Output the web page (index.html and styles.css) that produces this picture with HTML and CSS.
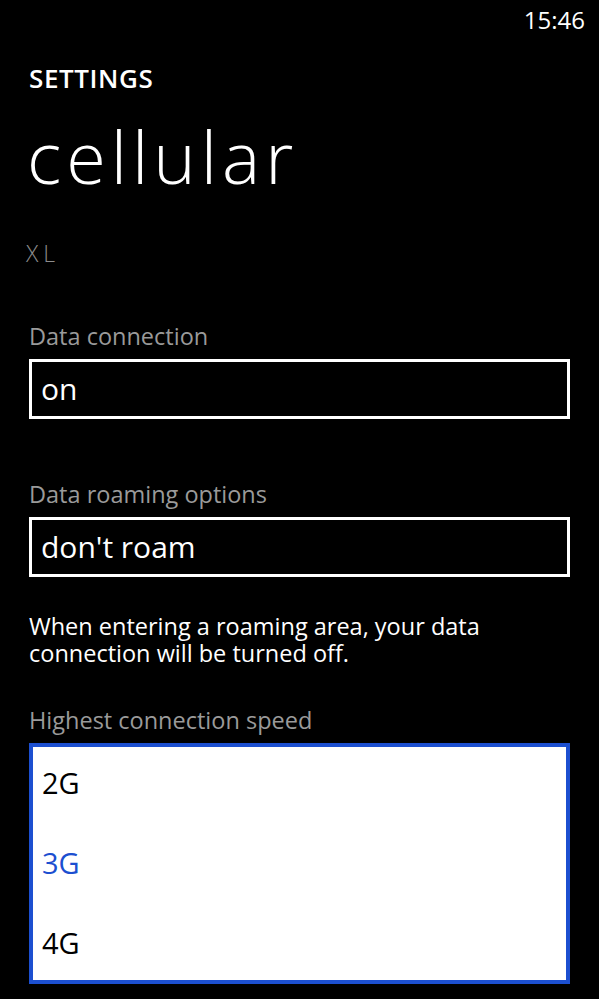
FILE: index.html
```html
<!DOCTYPE html>
<html lang="en">
<head>
  <meta charset="UTF-8">
  <meta name="viewport" content="width=device-width, initial-scale=1.0">
  <title>cellular</title>
  <link rel="stylesheet" href="styles.css">
</head>
<body>
  <div class="status">15:46</div>

  <div class="page">
    <div class="app-title">SETTINGS</div>
    <h1 class="page-title">cellular</h1>
    <div class="operator">XL</div>

    <div class="setting first">
      <div class="label">Data connection</div>
      <div class="picker">on</div>
    </div>

    <div class="setting">
      <div class="label">Data roaming options</div>
      <div class="picker">don't roam</div>
      <p class="note">When entering a roaming area, your data connection will be turned off.</p>
    </div>

    <div class="setting last">
      <div class="label">Highest connection speed</div>
      <ul class="picker-list">
        <li>2G</li>
        <li class="selected">3G</li>
        <li>4G</li>
      </ul>
    </div>
  </div>
</body>
</html>
```

FILE: styles.css
```css
body {
  margin: 0;
  background: #000;
  color: #fff;
  font-family: "Open Sans", "Noto Sans", sans-serif;
  width: 599px;
  height: 999px;
  overflow: hidden;
}
.status {
  height: 40px;
  line-height: 40px;
  text-align: right;
  padding-right: 14px;
  font-size: 24px;
}
.page {
  padding: 0 29px;
}
.app-title {
  margin-top: 20px;
  font-size: 26px;
  font-weight: 600;
  line-height: 36px;
  letter-spacing: 0.6px;
}
.page-title {
  margin: 15px 0 0 -2px;
  font-size: 72px;
  font-weight: 300;
  line-height: 90px;
  letter-spacing: 5px;
}
.operator {
  margin: 41px 0 0 -3px;
  height: 22px;
  font-size: 23px;
  font-weight: 300;
  line-height: 22px;
  letter-spacing: 5px;
  color: #8c8c8c;
}
.setting {
  margin-top: 60px;
}
.setting.first {
  margin-top: 57px;
}
.setting.last {
  margin-top: 38px;
}
.label {
  font-size: 23.5px;
  line-height: 30px;
  color: #9a9a9a;
}
.picker {
  margin-top: 8px;
  height: 54px;
  border: 3px solid #fff;
  padding: 0 9px;
  font-size: 30px;
  line-height: 54px;
}
.note {
  margin: 36px 0 0;
  font-size: 23.5px;
  line-height: 27px;
  padding-right: 60px;
}
.picker-list {
  list-style: none;
  margin: 8px 0 0;
  padding: 0 9px;
  height: 233px;
  background: #fff;
  border: 4px solid #1c4fd0;
  color: #000;
}
.picker-list li {
  height: 80px;
  line-height: 72px;
  font-size: 29px;
}
.picker-list li.selected {
  color: #1c4fd0;
}
```
